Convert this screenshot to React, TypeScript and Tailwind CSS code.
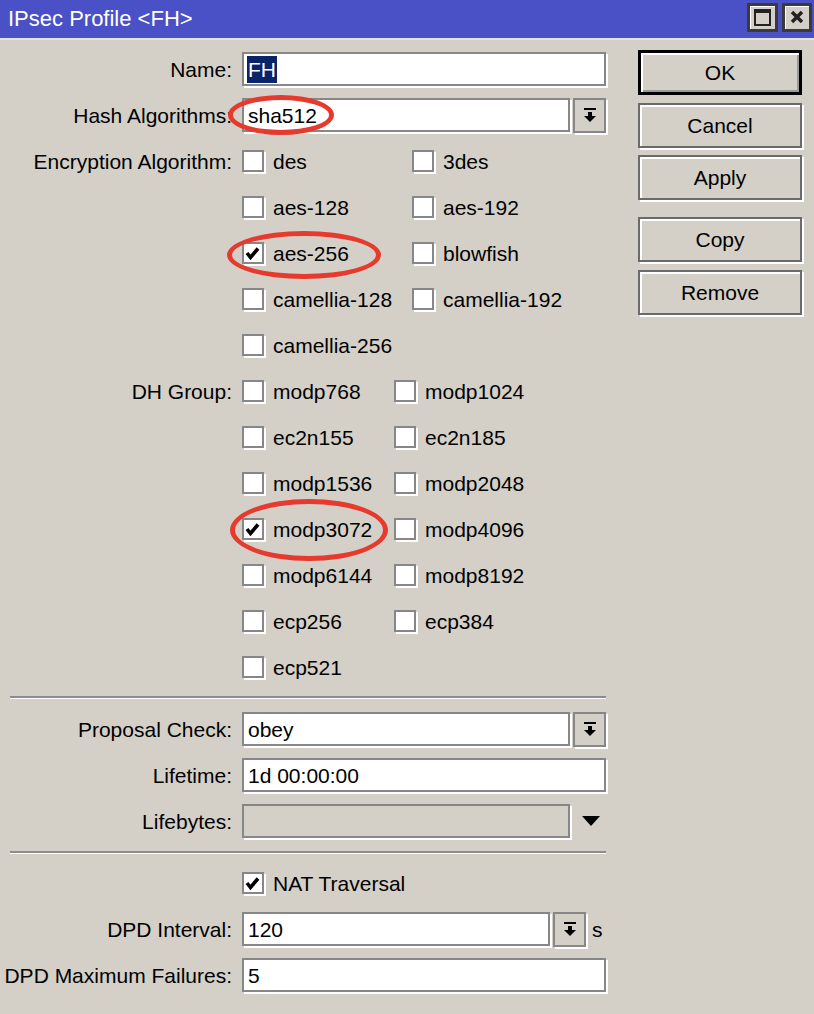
import React from "react";

const encryption: [string, boolean][] = [
  ["des", false],
  ["3des", false],
  ["aes-128", false],
  ["aes-192", false],
  ["aes-256", true],
  ["blowfish", false],
  ["camellia-128", false],
  ["camellia-192", false],
  ["camellia-256", false],
];

const dhGroups: [string, boolean][] = [
  ["modp768", false],
  ["modp1024", false],
  ["ec2n155", false],
  ["ec2n185", false],
  ["modp1536", false],
  ["modp2048", false],
  ["modp3072", true],
  ["modp4096", false],
  ["modp6144", false],
  ["modp8192", false],
  ["ecp256", false],
  ["ecp384", false],
  ["ecp521", false],
];

function DropIcon() {
  return (
    <svg width="12" height="15" viewBox="0 0 12 15">
      <rect x="0" y="0" width="12" height="2" fill="#000" />
      <rect x="4" y="4" width="4" height="5" fill="#000" />
      <polygon points="0,8 12,8 6,14" fill="#000" />
    </svg>
  );
}

function DropButton({ className = "" }: { className?: string }) {
  return (
    <div
      className={`h-[35px] border-2 border-[#878787] bg-[#d4d0c8] shadow-[2px_2px_0_#fff] flex items-center justify-center ${className}`}
    >
      <DropIcon />
    </div>
  );
}

function Field({
  children,
  className = "",
}: {
  children?: React.ReactNode;
  className?: string;
}) {
  return (
    <div
      className={`h-[34px] border-2 border-[#878787] shadow-[2px_2px_0_#fff] flex items-center pl-[3px] ${className}`}
    >
      {children}
    </div>
  );
}

function Checkbox({ checked }: { checked: boolean }) {
  return (
    <div className="w-[22px] h-[22px] shrink-0 border-2 border-[#878787] bg-white shadow-[2px_2px_0_#fff] flex items-center justify-center">
      {checked && (
        <svg width="16" height="16" viewBox="0 0 16 16">
          <polyline
            points="2,8 5.5,12.5 13,3.5"
            fill="none"
            stroke="#000"
            strokeWidth="3.6"
          />
        </svg>
      )}
    </div>
  );
}

function Row({
  label,
  children,
}: {
  label: string;
  children: React.ReactNode;
}) {
  return (
    <div className="flex items-center h-[46px]">
      <div className="w-[232px] text-right whitespace-nowrap">{label}</div>
      <div className="ml-[10px] flex items-center flex-1">{children}</div>
    </div>
  );
}

function CheckGroup({
  label,
  items,
  col,
}: {
  label: string;
  items: [string, boolean][];
  col: string;
}) {
  return (
    <div className="flex items-start">
      <div className="w-[232px] h-[46px] flex items-center justify-end whitespace-nowrap">
        {label}
      </div>
      <div className={`ml-[10px] grid ${col}`}>
        {items.map(([name, on]) => (
          <div key={name} className="h-[46px] flex items-center gap-[9px]">
            <Checkbox checked={on} />
            <span>{name}</span>
          </div>
        ))}
      </div>
    </div>
  );
}

function Separator({ className = "" }: { className?: string }) {
  return (
    <div className={`ml-[10px] w-[596px] h-[2px] bg-[#8c8c8c] border-b border-white box-content ${className}`} />
  );
}

function Btn({
  text,
  main = false,
  className = "",
}: {
  text: string;
  main?: boolean;
  className?: string;
}) {
  return (
    <div
      className={`h-[45px] w-[164px] flex items-center justify-center ${
        main
          ? "border-[3px] border-black shadow-[inset_2px_2px_0_#fff,inset_-2px_-2px_0_#9a9a9a]"
          : "border-2 border-[#6a6a6a] shadow-[inset_2px_2px_0_#fff,2px_2px_0_#fff]"
      } ${className}`}
    >
      {text}
    </div>
  );
}

function Ring({ className }: { className: string }) {
  return (
    <div
      className={`absolute border-[5px] border-[#e63a2e] rounded-[50%] pointer-events-none ${className}`}
    />
  );
}

export default function App() {
  return (
    <div className="relative w-[814px] h-[1014px] bg-[#d4d0c8] text-black text-[21px] leading-none font-['Liberation_Sans',Arial,sans-serif] overflow-hidden">
      {/* title bar */}
      <div className="h-[38px] bg-[#4a50c6] flex items-center justify-between pl-[8px] pr-[2px]">
        <span className="text-white text-[22px]">IPsec Profile &lt;FH&gt;</span>
        <div className="flex gap-[4px] mt-[-4px]">
          <div className="w-[31px] h-[29px] border-[3px] border-[#3a3a3a] bg-[#d4d0c8] shadow-[inset_1px_1px_0_#fff] flex items-center justify-center">
            <div className="w-[17px] h-[17px] border-2 border-t-[4px] border-[#222]" />
          </div>
          <div className="w-[30px] h-[29px] border-[3px] border-[#3a3a3a] bg-[#d4d0c8] shadow-[inset_1px_1px_0_#fff] flex items-center justify-center">
            <svg width="14" height="14" viewBox="0 0 14 14">
              <path d="M2 2 L12 12 M12 2 L2 12" stroke="#222" strokeWidth="3.5" />
            </svg>
          </div>
        </div>
      </div>
      <div className="h-[2px] bg-[#e4e2dc]" />

      <div className="flex">
        {/* form */}
        <div className="w-[606px] pt-[6px]">
          <Row label="Name:">
            <Field className="w-full bg-white">
              <span className="bg-[#0a246a] text-white px-[1px] py-[3px]">FH</span>
            </Field>
          </Row>
          <Row label="Hash Algorithms:">
            <Field className="w-[328px] bg-white">
              <span className="pl-[1px]">sha512</span>
            </Field>
            <DropButton className="ml-[3px] w-[33px]" />
          </Row>
          <CheckGroup
            label="Encryption Algorithm:"
            items={encryption}
            col="grid-cols-[170px_auto]"
          />
          <CheckGroup
            label="DH Group:"
            items={dhGroups}
            col="grid-cols-[152px_auto]"
          />

          <Separator className="mt-[6px] mb-[7px]" />

          <Row label="Proposal Check:">
            <Field className="w-[328px] bg-white">
              <span className="pl-[1px]">obey</span>
            </Field>
            <DropButton className="ml-[3px] w-[33px]" />
          </Row>
          <Row label="Lifetime:">
            <Field className="w-full bg-white">
              <span className="pl-[1px]">1d 00:00:00</span>
            </Field>
          </Row>
          <Row label="Lifebytes:">
            <Field className="w-[328px] bg-[#d4d0c8]" />
            <svg width="18" height="10" viewBox="0 0 18 10" className="ml-[12px]">
              <polygon points="0,0 18,0 9,10" fill="#000" />
            </svg>
          </Row>

          <Separator className="mt-[7px] mb-[6px]" />

          <div className="flex items-center h-[46px] pl-[242px] gap-[9px]">
            <Checkbox checked />
            <span>NAT Traversal</span>
          </div>
          <Row label="DPD Interval:">
            <Field className="w-[308px] bg-white">
              <span className="pl-[1px]">120</span>
            </Field>
            <DropButton className="ml-[3px] w-[33px]" />
            <span className="ml-[6px]">s</span>
          </Row>
          <Row label="DPD Maximum Failures:">
            <Field className="w-full bg-white">
              <span className="pl-[1px]">5</span>
            </Field>
          </Row>
        </div>

        {/* buttons */}
        <div className="ml-[32px] pt-[10px] flex flex-col">
          <Btn text="OK" main />
          <Btn text="Cancel" className="mt-[8px]" />
          <Btn text="Apply" className="mt-[7px]" />
          <Btn text="Copy" className="mt-[17px]" />
          <Btn text="Remove" className="mt-[8px]" />
        </div>
      </div>

      {/* red annotation rings */}
      <Ring className="left-[228px] top-[95px] w-[106px] h-[40px]" />
      <Ring className="left-[227px] top-[231px] w-[154px] h-[48px]" />
      <Ring className="left-[230px] top-[499px] w-[158px] h-[62px]" />
    </div>
  );
}
